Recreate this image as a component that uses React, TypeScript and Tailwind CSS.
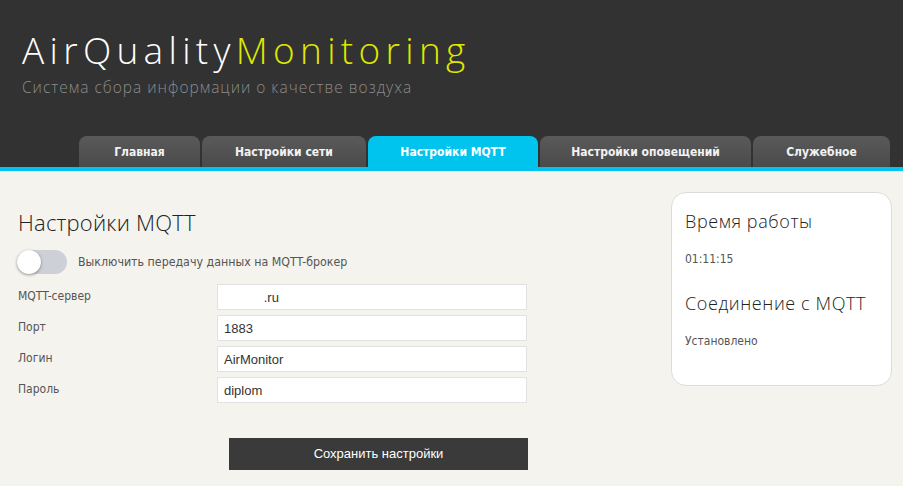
import React, { useState } from 'react';

const TABS = ['Главная', 'Настройки сети', 'Настройки MQTT', 'Настройки оповещений', 'Служебное'];
const TAB_W = ['w-[121px]', 'w-[164px]', 'w-[170px]', 'w-[211px]', 'w-[137px]'];

const FIELDS = [
  { label: 'MQTT-сервер', value: '           .ru' },
  { label: 'Порт', value: '1883' },
  { label: 'Логин', value: 'AirMonitor' },
  { label: 'Пароль', value: 'diplom' },
];

const tahoma = { fontFamily: 'Tahoma, "DejaVu Sans Condensed", "DejaVu Sans", sans-serif' };

export default function App() {
  const [disabled, setDisabled] = useState(false);
  const active = 2;

  return (
    <div className="w-[903px] h-[486px] overflow-hidden bg-[#f4f3ee]">
      {/* header */}
      <div className="bg-[#323232] h-[167px] flex flex-col">
        <div className="pl-[22px] pt-[28px] font-['Open_Sans',sans-serif] font-light">
          <h1 className="text-[37px] leading-[44px] tracking-[5.3px] text-white">
            AirQuality<span className="text-[#dfe800]">Monitoring</span>
          </h1>
          <p className="text-[15.5px] leading-[20px] mt-[5px] text-[#8c8c8c] tracking-[1px]">
            Система сбора информации о качестве воздуха
          </p>
        </div>
        <div className="mt-auto flex gap-[2px] pl-[79px]">
          {TABS.map((t, i) => (
            <button
              key={t}
              className={`${TAB_W[i]} h-[31px] rounded-t-[8px] text-[12px] font-bold ${
                i === active ? 'bg-[#00c4ee] text-white' : 'bg-gradient-to-b from-[#5a5a5a] to-[#4a4a4a] text-[#f2f2f2]'
              }`}
              style={tahoma}
            >
              {t}
            </button>
          ))}
        </div>
      </div>
      <div className="h-[4px] bg-[#00c4ee]" />

      <div className="flex">
        {/* form */}
        <div className="w-[671px] pl-[18px]">
          <h2 className="mt-[36px] text-[22px] leading-[30px] text-[#222] font-['Open_Sans',sans-serif] font-light tracking-[0.2px]">
            Настройки MQTT
          </h2>
          <div className="flex items-center mt-[13px] -ml-[1px]">
            <button
              onClick={() => setDisabled(!disabled)}
              className={`relative w-[50px] h-[24px] rounded-full ${disabled ? 'bg-[#00c4ee]' : 'bg-[#cdd0d7]'}`}
            >
              <span
                className={`absolute top-0 w-[24px] h-[24px] rounded-full bg-white shadow-[0_1px_3px_rgba(0,0,0,0.4)] ${
                  disabled ? 'left-[26px]' : 'left-0'
                }`}
              />
            </button>
            <span className="ml-[11px] text-[12.3px] text-[#555]" style={tahoma}>
              Выключить передачу данных на MQTT-брокер
            </span>
          </div>
          <div className="mt-[10px] flex flex-col gap-[5px]">
            {FIELDS.map(f => (
              <div key={f.label} className="flex">
                <label className="w-[199px] text-[12px] text-[#555] pt-[3px]" style={tahoma}>{f.label}</label>
                <input
                  defaultValue={f.value}
                  className="w-[310px] h-[26px] bg-white border border-[#e2e2e2] px-[6px] text-[13px] text-[#333] font-['Liberation_Sans',sans-serif] whitespace-pre outline-none"
                />
              </div>
            ))}
          </div>
          <button className="ml-[211px] mt-[35px] w-[299px] h-[32px] bg-[#3a3a3a] text-white text-[13px] font-['Liberation_Sans',sans-serif]">
            Сохранить настройки
          </button>
        </div>

        {/* status card */}
        <div className="mt-[21px] w-[221px] h-[194px] bg-white border border-[#dcdcdc] rounded-[15px] pl-[13px] pt-[16px]">
          <h3 className="text-[18px] leading-[24px] text-[#222] font-['Open_Sans',sans-serif] font-light tracking-[0.6px]">Время работы</h3>
          <p className="mt-[17px] text-[12px] text-[#555]" style={tahoma}>01:11:15</p>
          <h3 className="mt-[23px] text-[18px] leading-[24px] text-[#222] font-['Open_Sans',sans-serif] font-light tracking-[0.6px]">Соединение с MQTT</h3>
          <p className="mt-[17px] text-[12px] text-[#555]" style={tahoma}>Установлено</p>
        </div>
      </div>
    </div>
  );
}
